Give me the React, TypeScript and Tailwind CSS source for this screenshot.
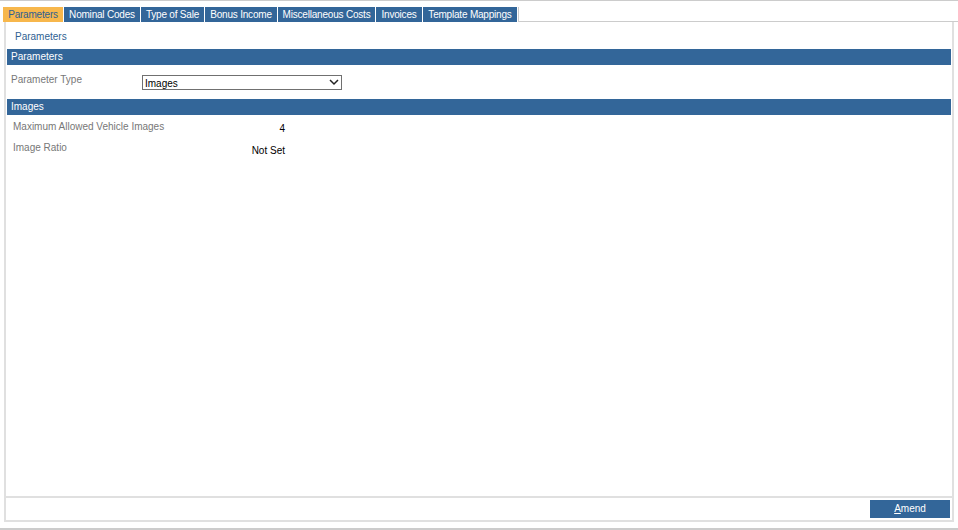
import { useState } from "react";

const tabs = [
  { label: "Parameters", w: "w-[60px]" },
  { label: "Nominal Codes", w: "w-[76px]" },
  { label: "Type of Sale", w: "w-[63px]" },
  { label: "Bonus Income", w: "w-[72px]" },
  { label: "Miscellaneous Costs", w: "w-[97px]" },
  { label: "Invoices", w: "w-[46px]" },
  { label: "Template Mappings", w: "w-[94px]" },
];

function SectionBar({ title }: { title: string }) {
  return (
    <div className="h-[16px] bg-[#336699] pl-[4px] text-white text-[10px] leading-[16px]">
      {title}
    </div>
  );
}

export default function App() {
  const [active, setActive] = useState(0);
  const [paramType, setParamType] = useState("Images");

  return (
    <div className="h-[530px] w-[958px] flex flex-col bg-white border-t border-[#cccccc] font-['Liberation_Sans',Tahoma,sans-serif] text-[10px] text-black overflow-hidden">
      {/* Tab strip */}
      <div className="flex pt-[6px] pl-[3px]">
        {tabs.map((t, i) => (
          <button
            key={t.label}
            onClick={() => setActive(i)}
            className={
              "h-[15px] mr-px leading-[15px] text-center whitespace-nowrap tracking-[-0.2px] " +
              t.w +
              " " +
              (i === active ? "bg-[#f7b74c] text-[#2f5f92]" : "bg-[#336699] text-white")
            }
          >
            {t.label}
          </button>
        ))}
        <div className="flex-1 border-l border-b border-[#cccccc]" />
      </div>

      {/* Main panel */}
      <div className="flex-1 flex flex-col mx-[4px] border-x-2 border-b-2 border-[#e0e0e0]">
        <div className="flex-1 px-[1px]">
          <div className="pl-[8px] pt-[7px] h-[27px] text-[#2f5f92]">Parameters</div>
          <SectionBar title="Parameters" />
          <div className="flex items-start h-[34px] pt-[10px]">
            <div className="w-[135px] pl-[4px] -mt-[3px] text-[#777777]">Parameter Type</div>
            <div className="relative w-[200px] h-[15px] border border-[#707070] bg-white">
              <select
                value={paramType}
                onChange={(e) => setParamType(e.target.value)}
                className="appearance-none w-full h-full pl-[2px] leading-[13px] bg-transparent outline-none"
              >
                <option>Images</option>
                <option>General</option>
              </select>
              <svg
                className="absolute right-[2px] top-[3px] pointer-events-none"
                width="10"
                height="7"
                viewBox="0 0 10 7"
              >
                <path d="M1 1 L5 5 L9 1" fill="none" stroke="#222" strokeWidth="1.5" />
              </svg>
            </div>
          </div>
          <SectionBar title="Images" />
          <div className="pl-[6px] pt-[4px]">
            <div className="flex h-[21px] whitespace-nowrap">
              <div className="w-[222px] shrink-0 text-[#777777]">Maximum Allowed Vehicle Images</div>
              <div className="w-[50px] shrink-0 pt-[2px] text-right">4</div>
            </div>
            <div className="flex h-[21px] whitespace-nowrap">
              <div className="w-[222px] shrink-0 text-[#777777]">Image Ratio</div>
              <div className="w-[50px] shrink-0 pt-[3px] text-right">Not Set</div>
            </div>
          </div>
        </div>

        {/* Footer */}
        <div className="h-[24px] border-t-2 border-[#e0e0e0] flex items-center justify-end pr-[2px] pb-[1px]">
          <button className="w-[80px] h-[18px] bg-[#336699] text-white text-[10px]">
            <span className="underline">A</span>mend
          </button>
        </div>
      </div>
      <div className="h-[6px]" />
      <div className="h-[2px] bg-[#cccccc]" />
    </div>
  );
}
